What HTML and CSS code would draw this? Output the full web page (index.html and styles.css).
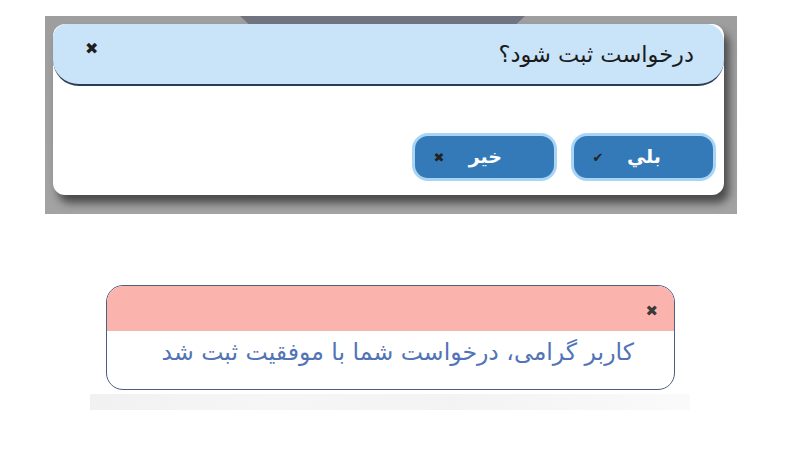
FILE: index.html
```html
<!DOCTYPE html>
<html lang="fa">
<head>
<meta charset="utf-8">
<link rel="stylesheet" href="styles.css">
</head>
<body>
<div class="backdrop">
  <div class="dialog">
    <div class="dlg-head" dir="rtl">
      <span class="dlg-title">درخواست ثبت شود؟</span>
      <span class="x dlg-close">✖</span>
    </div>
    <div class="dlg-actions" dir="rtl">
      <button class="btn"><span class="btn-text">بلي</span><span class="btn-ico">✔</span></button>
      <button class="btn"><span class="btn-text">خير</span><span class="btn-ico x">✖</span></button>
    </div>
  </div>
</div>

<div class="alert-wrap">
  <div class="alert">
    <div class="alert-head"><span class="x alert-close">✖</span></div>
    <div class="alert-body" dir="rtl">کاربر گرامی، درخواست شما با موفقیت ثبت شد</div>
  </div>
  <div class="ghost"></div>
</div>
</body>
</html>
```
FILE: styles.css
```css
html, body { margin: 0; padding: 0; background: #fff; }
body { font-family: "DejaVu Sans", "Noto Sans", sans-serif; width: 787px; height: 455px; overflow: hidden; }

.backdrop {
  position: relative;
  margin: 16px 0 0 45px;
  width: 692px;
  height: 198px;
  box-sizing: border-box;
  padding: 8px 0 0 8px;
  background: linear-gradient(180deg, #9e9e9e 0%, #a3a3a3 100%);
}
.backdrop::before {
  content: "";
  position: absolute;
  left: 195px; top: 0;
  width: 285px; height: 8px;
  background: #6f7480;
  clip-path: polygon(0 0, 100% 0, 97% 100%, 3% 100%);
}

.dialog {
  position: relative;
  width: 671px;
  height: 171px;
  background: #fff;
  border-radius: 12px;
  box-shadow: 5px 8px 9px rgba(0,0,0,0.55);
  display: flex;
  flex-direction: column;
}
.dlg-head {
  height: 62px;
  background: #c9e3f8;
  border-radius: 14px 18px 26px 26px;
  border-bottom: 2px solid #2a3b55;
  display: flex;
  align-items: center;
  justify-content: space-between;
  padding: 0 30px 0 32px;
  box-sizing: border-box;
}
.dlg-title { font-size: 22.5px; color: #1b1b1b; margin-top: 0; }
.x { font-family: "DejaVu Sans", sans-serif; color: #1e1e1e; }
.dlg-close { font-size: 16px; margin-top: -12px; }

.dlg-actions {
  display: flex;
  gap: 14px;
  padding: 47px 8px 0 0;
}
.btn {
  width: 145px;
  height: 48px;
  border-radius: 16px;
  background: #3479b8;
  border: 3px solid #a9d5f5;
  display: flex;
  align-items: center;
  justify-content: space-between;
  padding: 0 52px 0 16px;
  box-sizing: border-box;
  color: #fff;
  font-family: "DejaVu Sans", sans-serif;
}
.btn-text { font-size: 19px; font-weight: bold; margin-top: -2px; }
.btn-ico { font-size: 13px; color: #222; width: 16px; text-align: center; }

.alert-wrap {
  margin: 71px 0 0 90px;
  width: 600px;
}
.alert {
  margin-left: 16px;
  width: 569px;
  height: 105px;
  box-sizing: border-box;
  border: 1.5px solid #4c5f7e;
  border-radius: 17px;
  overflow: hidden;
  background: #fff;
}
.alert-head {
  height: 45px;
  background: #fbb4ad;
  display: flex;
  justify-content: flex-end;
  align-items: center;
  padding: 4px 16px 0 0;
  box-sizing: border-box;
}
.alert-close { font-size: 15px; color: #3a3a3a; }
.alert-body {
  font-size: 23.6px;
  color: #5274b6;
  padding: 7px 40px 0 0;
  text-align: right;
  white-space: nowrap;
}
.ghost {
  margin-top: 4px;
  height: 16px;
  background: linear-gradient(90deg, #f1f1f1, #f6f6f6 30%, #f3f3f3 60%, #fafafa);
}
```
